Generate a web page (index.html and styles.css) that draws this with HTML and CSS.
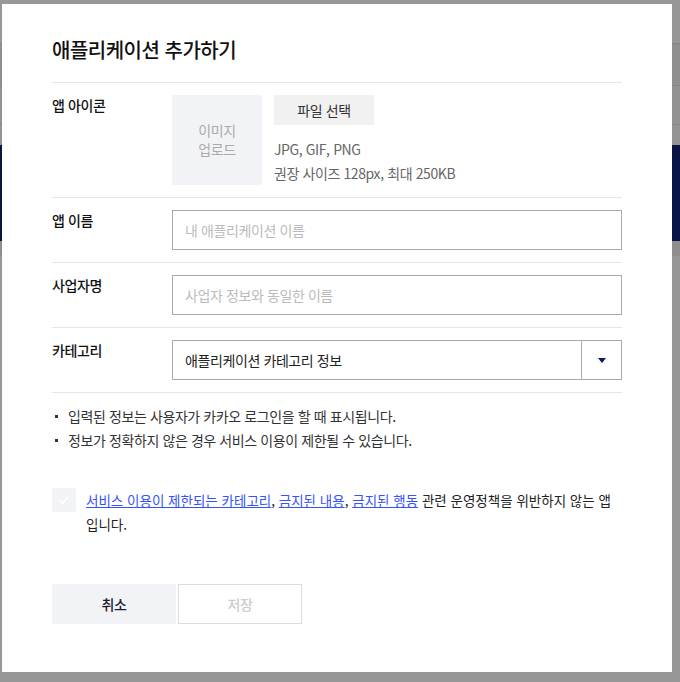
FILE: index.html
```html
<!DOCTYPE html>
<html lang="ko">
<head>
<meta charset="utf-8">
<title>애플리케이션 추가하기</title>
<link rel="stylesheet" href="styles.css">
</head>
<body>
<div class="backdrop">
  <div class="bd bd-top"></div>
  <div class="bd bd-line"></div>
  <div class="bd bd-b2"></div>
  <div class="bd bd-line"></div>
  <div class="bd bd-b3"></div>
  <div class="bd bd-line"></div>
  <div class="bd bd-b4"></div>
  <div class="bd bd-navy"></div>
  <div class="bd bd-b5"></div>
</div>
<div class="modal">
  <h1 class="title">애플리케이션 추가하기</h1>
  <div class="row">
    <div class="label">앱 아이콘</div>
    <div class="icon-field">
      <div class="img-box">이미지<br>업로드</div>
      <div class="file-info">
        <button class="file-btn" type="button">파일 선택</button>
        <p class="hint">JPG, GIF, PNG<br>권장 사이즈 128px, 최대 250KB</p>
      </div>
    </div>
  </div>
  <div class="row">
    <div class="label">앱 이름</div>
    <div class="input">내 애플리케이션 이름</div>
  </div>
  <div class="row">
    <div class="label">사업자명</div>
    <div class="input">사업자 정보와 동일한 이름</div>
  </div>
  <div class="row">
    <div class="label">카테고리</div>
    <div class="select">
      <span class="select-text">애플리케이션 카테고리 정보</span>
      <span class="select-arrow"><svg width="8" height="5" viewBox="0 0 8 5"><path d="M0 0H8L4 5Z" fill="#0b1a5c"/></svg></span>
    </div>
  </div>
  <ul class="notes">
    <li>입력된 정보는 사용자가 카카오 로그인을 할 때 표시됩니다.</li>
    <li>정보가 정확하지 않은 경우 서비스 이용이 제한될 수 있습니다.</li>
  </ul>
  <div class="agree">
    <span class="check"><svg width="12" height="10" viewBox="0 0 12 10"><path d="M1.5 5.2L4.6 8.2L10.5 1.8" fill="none" stroke="#fff" stroke-width="1.8"/></svg></span>
    <p class="agree-text"><a href="#">서비스 이용이 제한되는 카테고리</a><span>, </span><a href="#">금지된 내용</a><span>, </span><a href="#">금지된 행동</a><span> 관련 운영정책을 위반하지 않는 앱</span> <span>입니다.</span></p>
  </div>
  <div class="actions">
    <button class="btn btn-cancel" type="button">취소</button>
    <button class="btn btn-save" type="button">저장</button>
  </div>
</div>
</body>
</html>
```
FILE: styles.css
```css
html, body {
  margin: 0;
  padding: 0;
}
body {
  width: 680px;
  height: 682px;
  overflow: hidden;
  background: #979797;
  font-family: "Noto Sans CJK KR", "Noto Sans", sans-serif;
  letter-spacing: -0.025em;
}
.backdrop {
  display: flex;
  flex-direction: column;
}
.bd-top { height: 43px; background: #979797; }
.bd-line { height: 1px; background: #858585; }
.bd-b2 { height: 41px; background: #8f8f8f; }
.bd-b3 { height: 38px; background: #929292; }
.bd-b4 { height: 20px; background: #949494; }
.bd-navy { height: 96px; background: #0b1446; }
.bd-b5 { height: 15px; background: #8e8e8e; }

.modal {
  position: fixed;
  left: 2px;
  top: 4px;
  width: 670px;
  height: 668px;
  box-sizing: border-box;
  padding: 32px 50px 0;
  background: #fff;
}
.title {
  margin: 0;
  padding-bottom: 18px;
  font-size: 20px;
  line-height: 28px;
  font-weight: 500;
  color: #111;
  letter-spacing: -0.025em;
  border-bottom: 1px solid #e6e6e6;
}
.row {
  display: flex;
  padding: 12px 0;
  border-bottom: 1px solid #e6e6e6;
}
.label {
  width: 120px;
  flex: none;
  font-size: 14px;
  line-height: 20px;
  font-weight: 500;
  color: #111;
}
.icon-field {
  display: flex;
  gap: 12px;
}
.img-box {
  width: 90px;
  height: 90px;
  background: #f2f3f7;
  color: #aaa;
  font-size: 14px;
  line-height: 19px;
  display: flex;
  align-items: center;
  justify-content: center;
  text-align: center;
}
.file-info {
  display: flex;
  flex-direction: column;
  align-items: flex-start;
}
.file-btn {
  width: 100px;
  height: 30px;
  border: 0;
  padding: 0;
  background: #f1f1f1;
  font-family: inherit;
  font-size: 14px;
  color: #333;
  letter-spacing: -0.025em;
}
.hint {
  margin: 12px 0 0;
  font-size: 14px;
  line-height: 24px;
  color: #666;
}
.input, .select {
  flex: 1;
  height: 40px;
  box-sizing: border-box;
  border: 1px solid #aaa;
  display: flex;
  align-items: center;
  font-size: 14px;
}
.input {
  padding-left: 12px;
  color: #bbb;
}
.select {
  color: #222;
}
.select-text {
  flex: 1;
  padding-left: 12px;
}
.select-arrow {
  width: 39px;
  height: 38px;
  border-left: 1px solid #aaa;
  display: flex;
  align-items: center;
  justify-content: center;
}
.notes {
  list-style: none;
  margin: 0;
  padding: 11px 0 0;
}
.notes li {
  position: relative;
  padding-left: 16px;
  font-size: 14px;
  line-height: 24px;
  color: #333;
}
.notes li::before {
  content: "";
  position: absolute;
  left: 3px;
  top: 11px;
  width: 3px;
  height: 3px;
  background: #333;
}
.agree {
  display: flex;
  gap: 10px;
  margin-top: 36px;
}
.check {
  flex: none;
  width: 24px;
  height: 24px;
  background: #f2f3f7;
  display: flex;
  align-items: center;
  justify-content: center;
}
.agree-text {
  margin: 0;
  font-size: 13.5px;
  line-height: 24px;
  letter-spacing: 0;
  color: #222;
}
.agree-text a {
  color: #3652ff;
  text-decoration: underline;
}
.actions {
  display: flex;
  gap: 2px;
  margin-top: 48px;
}
.btn {
  width: 124px;
  height: 40px;
  box-sizing: border-box;
  font-family: inherit;
  font-size: 14px;
  font-weight: 500;
  padding: 0;
  letter-spacing: -0.025em;
}
.btn-cancel {
  border: 0;
  background: #f2f3f7;
  color: #1a1c33;
}
.btn-save {
  border: 1px solid #ddd;
  background: #fff;
  color: #ccc;
}
```
